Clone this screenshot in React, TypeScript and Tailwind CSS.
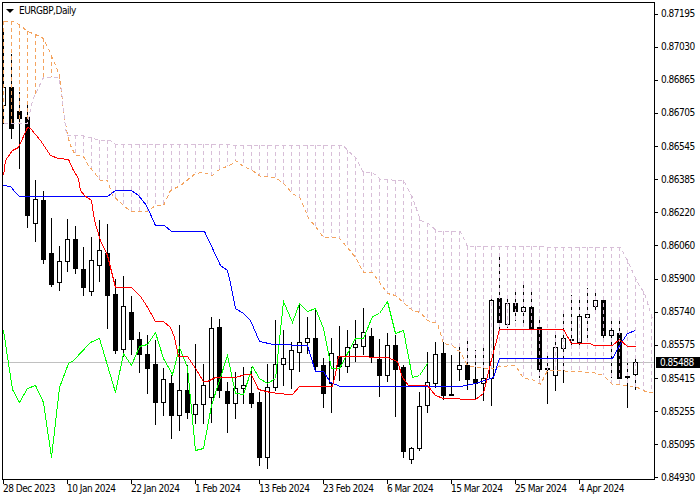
type Pt = [number, number];

// wickTop, bodyTop, bodyBottom, wickBottom, bearish (1 = black body). Bars sit 8px apart starting at x=3
const candles: [number, number, number, number, number][] = [
  [28, 87, 105, 123, 0], [54, 87, 128, 138, 1], [92, 111, 118, 168, 1], [105, 117, 215, 227, 1],
  [180, 199, 223, 241, 0], [191, 200, 259, 263, 1], [218, 253, 284, 286, 1], [246, 261, 282, 290, 0],
  [219, 239, 261, 271, 0], [226, 239, 268, 273, 1], [247, 269, 287, 295, 1], [237, 260, 291, 295, 0],
  [220, 250, 265, 281, 0], [224, 253, 295, 328, 1], [279, 294, 350, 353, 1], [276, 306, 349, 356, 0],
  [296, 312, 339, 354, 1], [332, 339, 354, 372, 1], [335, 354, 368, 393, 1], [340, 364, 402, 424, 1],
  [368, 379, 402, 415, 0], [375, 383, 415, 438, 1], [325, 390, 415, 430, 0], [365, 390, 412, 418, 1],
  [344, 404, 414, 423, 0], [364, 385, 404, 423, 0], [317, 328, 397, 422, 0], [319, 327, 390, 397, 1],
  [382, 391, 403, 432, 1], [372, 388, 403, 418, 0], [367, 385, 388, 403, 0], [367, 393, 403, 407, 1],
  [392, 402, 457, 465, 1], [364, 387, 457, 468, 0], [320, 364, 387, 390, 0], [330, 358, 364, 385, 0],
  [342, 350, 369, 388, 0], [303, 342, 352, 371, 0], [317, 338, 342, 353, 0], [309, 338, 366, 370, 1],
  [358, 365, 393, 407, 1], [338, 353, 383, 412, 0], [326, 356, 366, 380, 1], [330, 347, 366, 372, 0],
  [320, 344, 347, 361, 0], [308, 332, 346, 354, 0], [328, 336, 357, 362, 1], [339, 359, 375, 396, 1],
  [333, 345, 375, 381, 0], [335, 345, 369, 416, 1], [365, 367, 451, 457, 1], [447, 448, 459, 463, 0],
  [392, 406, 448, 450, 0], [352, 382, 405, 412, 0], [342, 354, 383, 387, 0], [342, 353, 395, 399, 1],
  [355, 394, 394, 394, 1], [345, 365, 369, 380, 0], [337, 365, 379, 389, 1], [350, 379, 383, 399, 1],
  [345, 378, 383, 400, 0], [297, 300, 378, 405, 0], [255, 298, 322, 330, 1], [297, 303, 324, 327, 0],
  [290, 303, 311, 320, 1], [283, 307, 311, 325, 0], [288, 307, 329, 333, 1], [318, 327, 369, 377, 1],
  [352, 368, 368, 403, 1], [335, 347, 375, 390, 0], [311, 338, 348, 382, 0], [295, 339, 339, 347, 0],
  [299, 316, 342, 345, 0], [288, 314, 317, 337, 0], [293, 300, 306, 313, 0], [297, 300, 335, 340, 1],
  [318, 330, 335, 377, 0], [321, 333, 378, 378, 1], [363, 376, 376, 407, 1], [356, 362, 374, 389, 0],
];

const red: Pt[] = [
  [3, 175], [5, 160], [12, 150], [18, 147], [27, 127], [30, 128], [40, 140], [50, 155], [58, 158], [68, 159],
  [73, 170], [78, 178], [80, 190], [84, 195], [91, 200], [94, 220], [100, 240], [107, 255], [115, 287], [131, 287],
  [140, 296], [146, 305], [155, 321], [163, 321], [170, 327], [174, 337], [178, 356], [187, 356], [195, 368],
  [203, 381], [207, 381], [215, 377], [235, 377], [245, 374], [251, 374], [258, 389], [270, 392], [288, 394],
  [292, 394], [299, 386], [332, 386], [335, 373], [338, 356], [367, 356], [370, 357], [387, 357], [397, 361],
  [402, 377], [408, 385], [427, 385], [435, 395], [443, 398], [475, 399], [483, 393], [490, 363], [499, 329],
  [563, 329], [571, 343], [590, 343], [593, 345], [612, 345], [619, 339], [627, 346], [635, 346],
];

const blue: Pt[] = [
  [3, 185], [10, 186], [15, 192], [19, 196], [107, 196], [115, 190], [131, 190], [138, 195], [146, 205], [155, 225],
  [164, 225], [171, 231], [204, 231], [213, 250], [220, 265], [227, 270], [230, 283], [235, 308], [243, 313],
  [250, 320], [259, 341], [273, 344], [307, 345], [315, 371], [323, 371], [330, 382], [340, 386], [460, 386],
  [475, 383], [493, 377], [499, 358], [612, 358], [619, 345], [627, 333], [635, 330],
];

const green: Pt[] = [
  [3, 330], [12, 389], [19, 402], [27, 388], [35, 385], [43, 402], [51, 457], [59, 387], [68, 363], [73, 360],
  [90, 342], [99, 338], [115, 392], [123, 353], [131, 365], [139, 346], [147, 344], [155, 332], [163, 358],
  [172, 374], [179, 347], [187, 367], [195, 450], [203, 448], [211, 405], [227, 355], [235, 393], [243, 394],
  [252, 366], [259, 378], [267, 383], [275, 378], [283, 301], [292, 322], [299, 303], [307, 311], [315, 308],
  [323, 328], [331, 368], [339, 368], [355, 338], [363, 338], [372, 316], [379, 313], [387, 301], [395, 333],
  [403, 330], [412, 377], [419, 375], [427, 363],
];

const sandy: Pt[] = [
  [3, 21], [12, 21], [19, 24], [27, 31], [35, 34], [43, 38], [51, 55], [59, 75], [63, 110], [67, 135], [70, 145],
  [75, 155], [83, 156], [88, 165], [93, 171], [100, 180], [107, 180], [112, 195], [120, 202], [130, 211], [147, 211],
  [155, 205], [163, 205], [170, 190], [180, 185], [195, 173], [203, 172], [212, 175], [217, 170], [233, 163],
  [235, 160], [243, 166], [252, 170], [260, 176], [275, 177], [283, 183], [292, 193], [300, 198], [308, 218],
  [315, 226], [323, 237], [338, 237], [347, 247], [355, 257], [363, 272], [372, 272], [387, 293], [395, 295],
  [403, 302], [412, 310], [420, 312], [427, 320], [437, 323], [443, 343], [452, 345], [460, 352], [467, 365],
  [483, 368], [492, 368], [499, 366], [515, 365], [523, 378], [532, 379], [540, 384], [547, 370], [555, 370],
  [593, 372], [603, 375], [612, 384], [627, 385], [637, 387], [647, 392], [652, 392],
];

const thistle: Pt[] = [
  [3, 123], [27, 123], [32, 100], [38, 87], [43, 77], [58, 77], [61, 90], [63, 110], [66, 135], [82, 135], [100, 140],
  [110, 140], [115, 144], [343, 145], [347, 150], [355, 157], [363, 172], [372, 172], [380, 179], [403, 180], [412, 197],
  [420, 220], [428, 223], [437, 231], [460, 231], [467, 246], [620, 247], [627, 260], [637, 282], [644, 293], [652, 318],
];

const prices = [
  "0.87195", "0.87030", "0.86865", "0.86705", "0.86545", "0.86385", "0.86220", "0.86060",
  "0.85900", "0.85740", "0.85575", "0.85415", "0.85255", "0.85095", "0.84930",
];

const dates = [
  "28 Dec 2023", "10 Jan 2024", "22 Jan 2024", "1 Feb 2024", "13 Feb 2024",
  "23 Feb 2024", "6 Mar 2024", "15 Mar 2024", "25 Mar 2024", "4 Apr 2024",
];

const yAt = (line: Pt[], x: number) => {
  for (let i = 1; i < line.length; i++) {
    const [x0, y0] = line[i - 1];
    const [x1, y1] = line[i];
    if (x <= x1) return y0 + ((y1 - y0) * (x - x0)) / (x1 - x0);
  }
  return line[line.length - 1][1];
};

const toPoints = (line: Pt[]) => line.map(([x, y]) => `${x + 0.5},${y + 0.5}`).join(" ");

const cloudBars = Array.from({ length: 82 }, (_, i) => 3 + 8 * i);

function Chart() {
  return (
    <svg width={651} height={476} viewBox="3 3 651 476" shapeRendering="crispEdges" className="block">
      <rect x={3} y={362} width={651} height={1} fill="#c0c0c0" />

      {candles.map(([wickTop, top, bottom, wickBottom, bear], i) => {
        const x = 3 + 8 * i;
        return (
          <g key={i}>
            <rect x={x} y={wickTop} width={1} height={wickBottom - wickTop + 1} fill="#000" />
            {top === bottom ? (
              <rect x={x - 2} y={top} width={5} height={2} fill="#000" />
            ) : (
              <rect
                x={x - 1.5}
                y={top + 0.5}
                width={4}
                height={bottom - top}
                fill={bear ? "#000" : "#fff"}
                stroke="#000"
              />
            )}
          </g>
        );
      })}

      {cloudBars.map((x) => {
        const a = yAt(sandy, x);
        const b = yAt(thistle, x);
        return (
          <line
            key={x}
            x1={x + 0.5}
            x2={x + 0.5}
            y1={Math.min(a, b)}
            y2={Math.max(a, b)}
            stroke={a < b ? "#f4a460" : "#d8bfd8"}
            strokeDasharray="4 3"
          />
        );
      })}
      <polyline points={toPoints(sandy)} fill="none" stroke="#f4a460" strokeDasharray="4 3" />
      <polyline points={toPoints(thistle)} fill="none" stroke="#d8bfd8" strokeDasharray="4 3" />

      <polyline points={toPoints(green)} fill="none" stroke="#00ff00" />
      <polyline points={toPoints(blue)} fill="none" stroke="#0000ff" />
      <polyline points={toPoints(red)} fill="none" stroke="#ff0000" />
    </svg>
  );
}

export default function App() {
  return (
    <div className="relative flex w-[700px] h-[500px] overflow-hidden bg-white text-black text-[10px] leading-[12px] tracking-[-0.5px] font-['DejaVu_Sans_Condensed','DejaVu_Sans',sans-serif]">
      <div className="flex flex-col w-[654px] pt-[2px] pl-[2px] shrink-0">
        <div className="relative w-[653px] h-[478px] border border-black">
          <Chart />
          <div className="absolute left-[3px] top-[2px] flex items-center gap-[5px]">
            <div className="w-0 h-0 border-x-[4px] border-x-transparent border-t-[4px] border-t-black" />
            <span>EURGBP,Daily</span>
          </div>
        </div>
        <div className="flex pl-[1px]">
          {dates.map((d) => (
            <div key={d} className="w-[64px] flex flex-col">
              <div className="w-px h-[4px] bg-black" />
              <span className="-mt-[1px] whitespace-nowrap">{d}</span>
            </div>
          ))}
        </div>
      </div>

      <div className="flex flex-col justify-between h-[476px] mt-[8px] pl-[1px]">
        {prices.map((p) => (
          <div key={p} className="flex items-center gap-[3px] h-[12px]">
            <div className="w-[3px] h-px bg-black" />
            <span>{p}</span>
          </div>
        ))}
      </div>

      <div className="absolute left-[656px] top-[357px] w-[44px] h-[11px] bg-black text-white pl-[4px] leading-[11px]">
        0.85488
      </div>
    </div>
  );
}
